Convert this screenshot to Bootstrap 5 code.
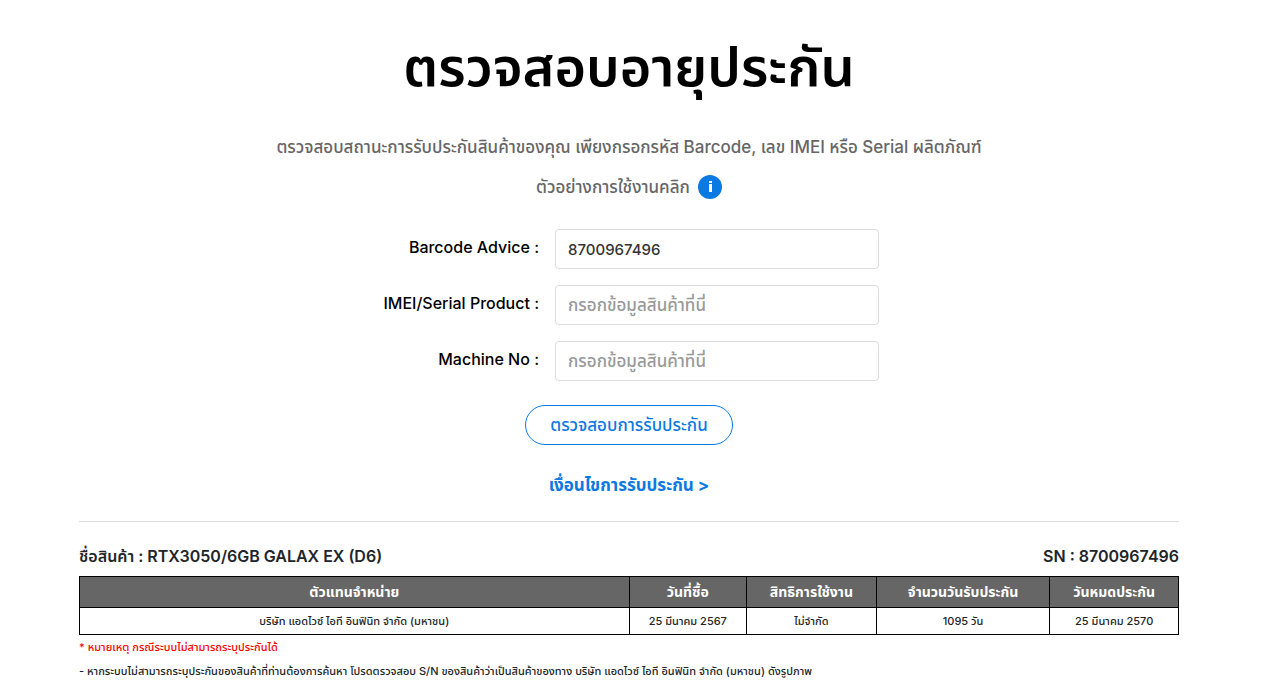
<!DOCTYPE html>
<html lang="th">
<head>
<meta charset="utf-8">
<meta name="viewport" content="width=device-width, initial-scale=1">
<title>ตรวจสอบอายุประกัน</title>
<link href="https://cdn.jsdelivr.net/npm/bootstrap@5.3.0/dist/css/bootstrap.min.css" rel="stylesheet">
<style>
  :root { --brand: #0a7ae2; --line: #dcdcdc; }
  body { font-family: Inter, "Noto Sans Thai", "Noto Sans", sans-serif; font-size: 16px; color: #212529; padding-right: 4px; }
  .page-wrap { max-width: 1132px; }
  .page-title { font-size: 54px; line-height: 80px; font-weight: 600; color: #000; padding-top: 27px; margin-bottom: 20px; }
  .intro { color: #666; font-size: 17px; line-height: 40px; font-weight: 500; }
  .info-btn { width: 24px; height: 24px; background: var(--brand); }
  .lookup { max-width: 500px; padding-top: 22px; }
  .lookup label { width: 160px; color: #000; line-height: 20px; font-weight: 500; }
  .lookup .form-control { height: 40px; border-color: var(--line); border-radius: 4px; color: #333; font-size: 15px; font-weight: 500; }
  .lookup .form-control::placeholder { color: #999; font-size: 17px; }
  .check-btn { height: 40px; color: var(--brand); border: 1px solid var(--brand); font-size: 17px; font-weight: 500; line-height: 24px; }
  .terms-link { color: var(--brand); font-size: 17px; font-weight: 700; line-height: 24px; }
  .result { border-top: 1px solid var(--line); padding-top: 22px; }
  .result-head { font-size: 16px; line-height: 24px; font-weight: 600; }
  .warranty { border-collapse: collapse; text-align: center; font-size: 11px; line-height: 18px; font-weight: 500; }
  .warranty th, .warranty td { border: 1px solid #000; padding: 4px; }
  .warranty th { background: #666; color: #fff; font-size: 14px; line-height: 22px; font-weight: 700; }
  .note { font-size: 11px; line-height: 24px; font-weight: 500; }
  .note-alert { color: #f00; }
</style>
</head>
<body>
<main class="container-fluid page-wrap px-3">
  <h1 class="page-title text-center">ตรวจสอบอายุประกัน</h1>
  <div class="intro text-center">
    <p class="mb-0">ตรวจสอบสถานะการรับประกันสินค้าของคุณ เพียงกรอกรหัส Barcode, เลข IMEI หรือ Serial ผลิตภัณฑ์</p>
    <p class="mb-0 d-flex justify-content-center align-items-center gap-2">ตัวอย่างการใช้งานคลิก
      <button type="button" class="info-btn btn p-0 border-0 rounded-circle d-inline-flex align-items-center justify-content-center" aria-label="ตัวอย่างการใช้งาน">
        <svg width="24" height="24" viewBox="0 0 24 24" fill="#fff" aria-hidden="true"><rect x="11" y="6" width="3" height="2"/><rect x="11" y="9" width="3" height="8"/></svg>
      </button>
    </p>
  </div>
  <form class="d-flex flex-column align-items-center">
    <div class="lookup w-100 d-flex flex-column gap-3 mb-4">
      <div class="d-flex gap-3">
        <label for="barcode" class="text-end flex-shrink-0 pt-2">Barcode Advice :</label>
        <input id="barcode" type="text" class="form-control" value="8700967496">
      </div>
      <div class="d-flex gap-3">
        <label for="imei" class="text-end flex-shrink-0 pt-2">IMEI/Serial Product :</label>
        <input id="imei" type="text" class="form-control" placeholder="กรอกข้อมูลสินค้าที่นี่">
      </div>
      <div class="d-flex gap-3">
        <label for="machine" class="text-end flex-shrink-0 pt-2">Machine No :</label>
        <input id="machine" type="text" class="form-control" placeholder="กรอกข้อมูลสินค้าที่นี่">
      </div>
    </div>
    <button type="button" class="check-btn btn rounded-pill px-4 py-1">ตรวจสอบการรับประกัน</button>
  </form>
  <div class="text-center mt-4 pt-1 mb-4"><a href="#" class="terms-link text-decoration-none">เงื่อนไขการรับประกัน &gt;</a></div>
  <section class="result">
    <div class="result-head d-flex justify-content-between mb-2">
      <span>ชื่อสินค้า : RTX3050/6GB GALAX EX (D6)</span>
      <span>SN : 8700967496</span>
    </div>
    <table class="warranty w-100">
      <colgroup><col style="width:50%"><col style="width:10.7%"><col style="width:11.8%"><col style="width:15.8%"><col style="width:11.7%"></colgroup>
      <thead>
        <tr><th scope="col">ตัวแทนจำหน่าย</th><th scope="col">วันที่ซื้อ</th><th scope="col">สิทธิการใช้งาน</th><th scope="col">จำนวนวันรับประกัน</th><th scope="col">วันหมดประกัน</th></tr>
      </thead>
      <tbody>
        <tr><td>บริษัท แอดไวซ์ ไอที อินฟินิท จำกัด (มหาชน)</td><td>25 มีนาคม 2567</td><td>ไม่จำกัด</td><td>1095 วัน</td><td>25 มีนาคม 2570</td></tr>
      </tbody>
    </table>
    <p class="note note-alert mb-0">* หมายเหตุ กรณีระบบไม่สามารถระบุประกันได้</p>
    <p class="note mb-0">- หากระบบไม่สามารถระบุประกันของสินค้าที่ท่านต้องการค้นหา โปรดตรวจสอบ S/N ของสินค้าว่าเป็นสินค้าของทาง บริษัท แอดไวซ์ ไอที อินฟินิท จำกัด (มหาชน) ดังรูปภาพ</p>
  </section>
</main>
<script src="https://cdn.jsdelivr.net/npm/bootstrap@5.3.0/dist/js/bootstrap.bundle.min.js"></script>
</body>
</html>
